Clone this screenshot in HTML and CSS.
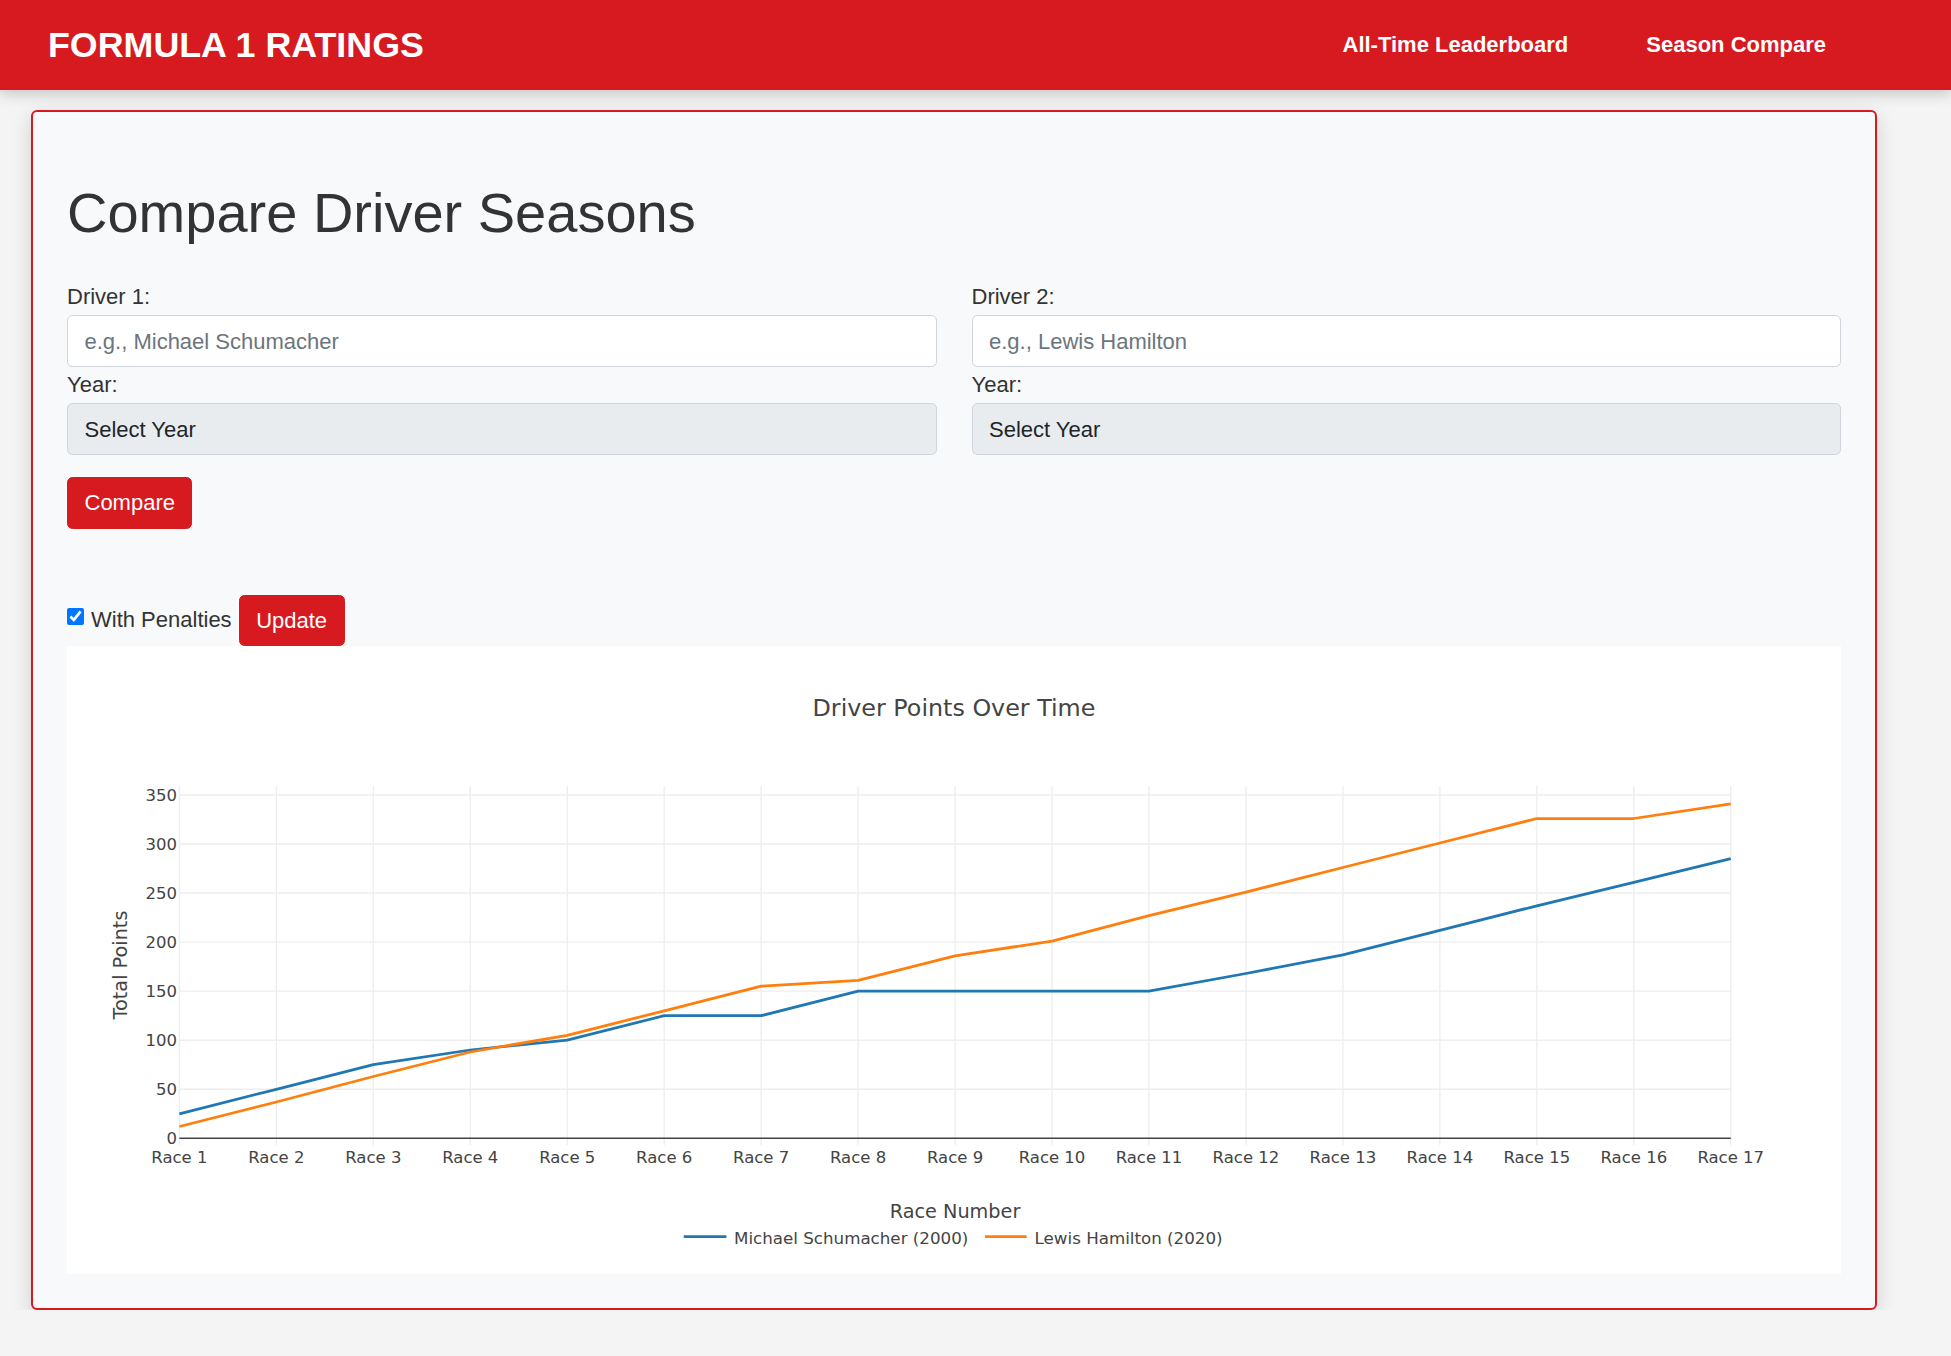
FILE: index.html
```html
<!DOCTYPE html>
<html lang="en">
<head>
<meta charset="utf-8">
<title>Formula 1 Ratings - Season Compare</title>
<link rel="stylesheet" href="styles.css">
</head>
<body>
<header class="topbar">
  <a class="brand" href="#">FORMULA 1 RATINGS</a>
  <nav class="nav">
    <a href="#">All-Time Leaderboard</a>
    <a href="#">Season Compare</a>
  </nav>
</header>

<main class="card">
  <h1 class="page-title">Compare Driver Seasons</h1>

  <form class="compare-form">
    <div class="form-grid">
      <div class="col">
        <label class="form-label" for="d1">Driver 1:</label>
        <input class="field" id="d1" type="text" placeholder="e.g., Michael Schumacher">
        <label class="form-label" for="y1">Year:</label>
        <select class="field select" id="y1"><option>Select Year</option></select>
      </div>
      <div class="col">
        <label class="form-label" for="d2">Driver 2:</label>
        <input class="field" id="d2" type="text" placeholder="e.g., Lewis Hamilton">
        <label class="form-label" for="y2">Year:</label>
        <select class="field select" id="y2"><option>Select Year</option></select>
      </div>
    </div>
    <button class="btn btn-compare" type="button">Compare</button>
  </form>

  <div class="penalty-row">
    <input class="check" type="checkbox" id="pen" checked>
    <label class="penalty-label" for="pen">With Penalties</label>
    <button class="btn" type="button">Update</button>
  </div>

  <div class="chart">
    <svg class="chart-svg" width="1774" height="628" viewBox="0 0 1774 628" xmlns="http://www.w3.org/2000/svg">
      <g class="grid" stroke="#eeeeee" stroke-width="1.375">
        <line x1="112.4" y1="140" x2="112.4" y2="499"/>
        <line x1="209.36" y1="140" x2="209.36" y2="499"/>
        <line x1="306.32" y1="140" x2="306.32" y2="499"/>
        <line x1="403.28" y1="140" x2="403.28" y2="499"/>
        <line x1="500.24" y1="140" x2="500.24" y2="499"/>
        <line x1="597.2" y1="140" x2="597.2" y2="499"/>
        <line x1="694.16" y1="140" x2="694.16" y2="499"/>
        <line x1="791.12" y1="140" x2="791.12" y2="499"/>
        <line x1="888.08" y1="140" x2="888.08" y2="499"/>
        <line x1="985.04" y1="140" x2="985.04" y2="499"/>
        <line x1="1082" y1="140" x2="1082" y2="499"/>
        <line x1="1178.96" y1="140" x2="1178.96" y2="499"/>
        <line x1="1275.92" y1="140" x2="1275.92" y2="499"/>
        <line x1="1372.88" y1="140" x2="1372.88" y2="499"/>
        <line x1="1469.84" y1="140" x2="1469.84" y2="499"/>
        <line x1="1566.8" y1="140" x2="1566.8" y2="499"/>
        <line x1="1663.76" y1="140" x2="1663.76" y2="499"/>
        <line x1="112.4" y1="443.25" x2="1663.8" y2="443.25"/>
        <line x1="112.4" y1="394.2" x2="1663.8" y2="394.2"/>
        <line x1="112.4" y1="345.15" x2="1663.8" y2="345.15"/>
        <line x1="112.4" y1="296.1" x2="1663.8" y2="296.1"/>
        <line x1="112.4" y1="247.05" x2="1663.8" y2="247.05"/>
        <line x1="112.4" y1="198" x2="1663.8" y2="198"/>
        <line x1="112.4" y1="148.95" x2="1663.8" y2="148.95"/>
      </g>
      <line x1="112.4" y1="492.3" x2="1663.8" y2="492.3" stroke="#444444" stroke-width="1.5"/>

      <polyline fill="none" stroke="#1f77b4" stroke-width="2.75" stroke-linejoin="round"
        points="112.4,467.8 209.36,443.3 306.32,418.7 403.28,404 500.24,394.2 597.2,369.7 694.16,369.7 791.12,345.15 888.08,345.15 985.04,345.15 1082,345.15 1178.96,327.5 1275.92,308.9 1372.88,284.3 1469.84,259.8 1566.8,236.3 1663.76,212.7"/>
      <polyline fill="none" stroke="#ff7f0e" stroke-width="2.75" stroke-linejoin="round"
        points="112.4,480.5 209.36,456 306.32,430.5 403.28,406 500.24,389.3 597.2,364.8 694.16,340.2 791.12,334.4 888.08,309.8 985.04,295.1 1082,269.6 1178.96,246.1 1275.92,221.5 1372.88,197 1469.84,172.5 1566.8,172.5 1663.76,157.8"/>

      <g class="ytick" text-anchor="end">
        <text x="110" y="498.3">0</text>
        <text x="110" y="449.25">50</text>
        <text x="110" y="400.2">100</text>
        <text x="110" y="351.15">150</text>
        <text x="110" y="302.1">200</text>
        <text x="110" y="253.05">250</text>
        <text x="110" y="204">300</text>
        <text x="110" y="154.95">350</text>
      </g>
      <g class="xtick" text-anchor="middle">
        <text x="112.4" y="517.3">Race 1</text>
        <text x="209.36" y="517.3">Race 2</text>
        <text x="306.32" y="517.3">Race 3</text>
        <text x="403.28" y="517.3">Race 4</text>
        <text x="500.24" y="517.3">Race 5</text>
        <text x="597.2" y="517.3">Race 6</text>
        <text x="694.16" y="517.3">Race 7</text>
        <text x="791.12" y="517.3">Race 8</text>
        <text x="888.08" y="517.3">Race 9</text>
        <text x="985.04" y="517.3">Race 10</text>
        <text x="1082" y="517.3">Race 11</text>
        <text x="1178.96" y="517.3">Race 12</text>
        <text x="1275.92" y="517.3">Race 13</text>
        <text x="1372.88" y="517.3">Race 14</text>
        <text x="1469.84" y="517.3">Race 15</text>
        <text x="1566.8" y="517.3">Race 16</text>
        <text x="1663.76" y="517.3">Race 17</text>
      </g>

      <text class="chart-title" x="887" y="70" text-anchor="middle">Driver Points Over Time</text>
      <text class="axis-title" x="888" y="572" text-anchor="middle">Race Number</text>
      <text class="axis-title" transform="translate(60 319) rotate(-90)" text-anchor="middle">Total Points</text>

      <line x1="616.7" y1="590.7" x2="659.4" y2="590.7" stroke="#1f77b4" stroke-width="2.75"/>
      <text class="legend-text" x="667" y="598">Michael Schumacher (2000)</text>
      <line x1="918" y1="590.7" x2="959.7" y2="590.7" stroke="#ff7f0e" stroke-width="2.75"/>
      <text class="legend-text" x="967.6" y="598">Lewis Hamilton (2020)</text>
    </svg>
  </div>
</main>
</body>
</html>
```

FILE: styles.css
```css
* {
  box-sizing: border-box;
}

body {
  margin: 0;
  background: #f4f4f4;
  font-family: "Liberation Sans", Arial, sans-serif;
  color: #333333;
}

/* Top bar */
.topbar {
  height: 90px;
  background: #d71920;
  display: flex;
  align-items: center;
  justify-content: space-between;
  padding: 0 125px 0 48px;
  box-shadow: 0 3px 14px rgba(0, 0, 0, 0.22);
  position: relative;
  z-index: 1;
}

.brand {
  color: #ffffff;
  font-size: 35.8px;
  font-weight: bold;
  text-decoration: none;
}

.nav {
  display: flex;
  gap: 78px;
}

.nav a {
  color: #ffffff;
  font-size: 22px;
  font-weight: bold;
  text-decoration: none;
}

/* Card */
.card {
  display: block;
  width: 1846px;
  margin: 20px 0 0 31px;
  padding: 34px;
  background: #f8f9fa;
  border: 2px solid #d71920;
  border-radius: 6px;
  box-shadow: 0 6px 20px rgba(0, 0, 0, 0.15);
}

.page-title {
  font-size: 56px;
  font-weight: normal;
  line-height: 1.2;
  color: #333333;
  margin: 33px 0 34px;
}

.form-grid {
  display: grid;
  grid-template-columns: 1fr 1fr;
  column-gap: 35px;
}

.form-label {
  display: block;
  font-size: 22px;
  line-height: 33px;
  margin-bottom: 2px;
  color: #333333;
}

.field {
  display: block;
  width: 100%;
  height: 52px;
  margin: 0 0 1px;
  padding: 1px 16.5px 0;
  font-family: "Liberation Sans", Arial, sans-serif;
  font-size: 22px;
  color: #212529;
  background: #ffffff;
  border: 1px solid #ced4da;
  border-radius: 5.5px;
  outline: none;
}

.field::placeholder {
  color: #6c757d;
}

.select {
  appearance: none;
  -webkit-appearance: none;
  background: #e9ecef;
  margin: 0;
}

.btn {
  font-family: "Liberation Sans", Arial, sans-serif;
  font-size: 22px;
  line-height: 33px;
  padding: 8.25px 16.5px;
  color: #ffffff;
  background: #d71920;
  border: 1px solid #d71920;
  border-radius: 5.5px;
  cursor: pointer;
}

.btn-compare {
  margin-top: 22px;
  display: block;
}

.penalty-row {
  display: flex;
  align-items: center;
  margin-top: 66px;
}

.check {
  width: 17px;
  height: 17px;
  margin: 0 7px 0 0;
  align-self: flex-start;
  margin-top: 13px;
}

.penalty-label {
  font-size: 22px;
  line-height: 33px;
  margin-right: 7px;
  color: #333333;
  position: relative;
  top: -1px;
}

/* Chart */
.chart {
  background: #ffffff;
  height: 628px;
}

.chart-svg {
  display: block;
  font-family: "DejaVu Sans", Verdana, sans-serif;
}

.chart-svg text {
  fill: #444444;
}

.ytick text,
.xtick text {
  font-size: 16.5px;
}

.legend-text {
  font-size: 16.7px;
}

.chart-title {
  font-size: 23.8px;
}

.axis-title {
  font-size: 19.25px;
}
```
